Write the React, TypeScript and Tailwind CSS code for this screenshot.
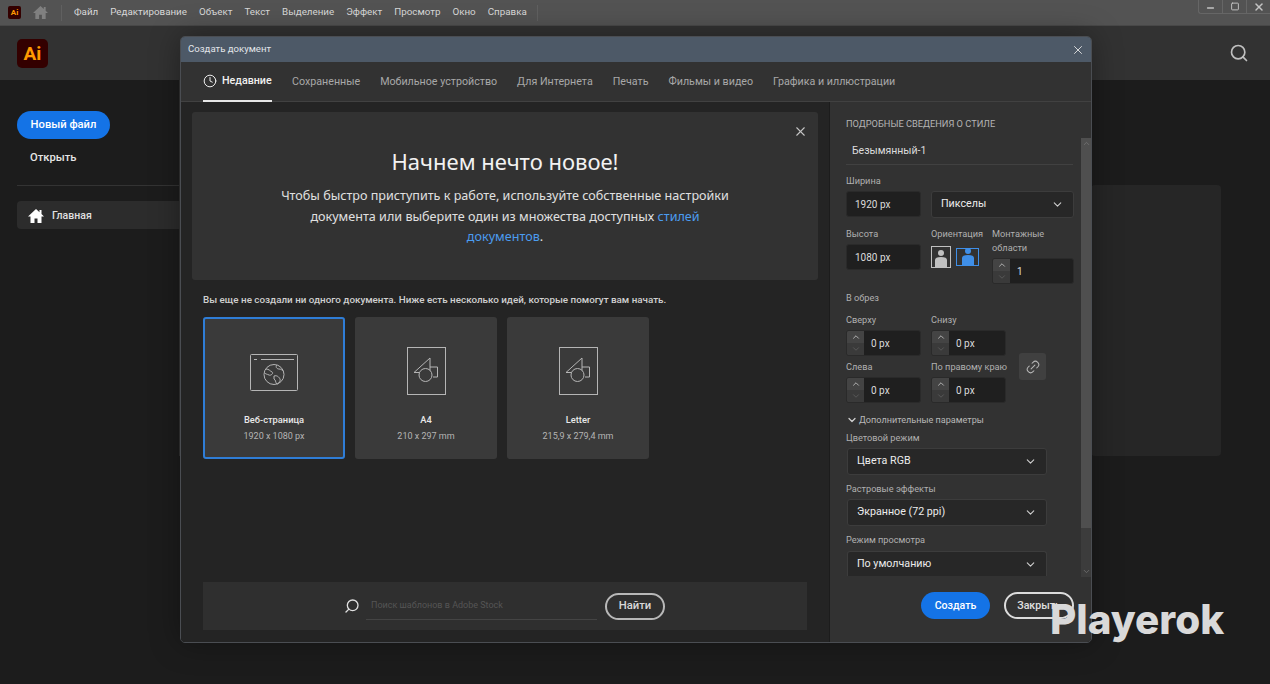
/**
 * Illustrator start screen with the "new document" dialog open
 */
import { ChevronDown, ChevronUp, Clock, Link2, Search, X, Minus, Square } from "lucide-react";

const menu = ["Файл", "Редактирование", "Объект", "Текст", "Выделение", "Эффект", "Просмотр", "Окно", "Справка"];
const tabs = ["Сохраненные", "Мобильное устройство", "Для Интернета", "Печать", "Фильмы и видео", "Графика и иллюстрации"];

function HomeGlyph({ size, color }: { size: number; color: string }) {
  return (
    <svg width={size} height={size} viewBox="0 0 16 15" fill={color} className="shrink-0">
      <path d="M8 0.5 L0 8 H2.5 V14.5 H6.5 V10 H9.5 V14.5 H13.5 V8 H16 L13.5 5.6 V1.5 H11.5 V3.8 Z" />
    </svg>
  );
}

function TopBar() {
  return (
    <div className="flex h-[26px] items-center bg-[#535353] border-b border-[#484848] pl-[8px] relative">
      <div className="w-[13px] h-[13px] rounded-[2px] bg-[#330000] text-[#ff9a00] text-[8px] font-bold flex items-center justify-center leading-none">
        Ai
      </div>
      <div className="ml-[12px]">
        <HomeGlyph size={15} color="#808080" />
      </div>
      <div className="ml-[13px] mr-[12px] w-px h-[16px] bg-[#606060]" />
      <div className="flex gap-[12px] text-[9.8px] text-[#d8d8d8]">
        {menu.map((m) => (
          <span key={m}>{m}</span>
        ))}
      </div>
      <div className="ml-[10px] w-px h-[16px] bg-[#606060]" />
      <div className="absolute right-[0px] top-0 w-[72px] h-[14px] border-l border-b border-[#666] rounded-bl-[3px] flex items-center text-[#c4c4c4]">
        <div className="w-[24px] flex justify-center border-r border-[#666] h-full items-end">
          <Minus className="w-[11px] h-[10px]" strokeWidth={3.5} />
        </div>
        <div className="w-[24px] flex justify-center border-r border-[#666] h-full items-center">
          <Square className="w-[10px] h-[9px]" strokeWidth={2.5} />
        </div>
        <div className="w-[23px] flex justify-center">
          <X className="w-[12px] h-[12px]" strokeWidth={3} />
        </div>
      </div>
    </div>
  );
}

function Sidebar() {
  return (
    <div className="w-[180px] pl-[17px] pt-[31px] shrink-0 border-r border-[#333]">
      <div className="w-[93px] h-[28px] rounded-full bg-[#1473e6] text-white text-[11.2px] font-medium flex items-center justify-center">
        Новый файл
      </div>
      <div className="mt-[11px] pl-[13px] text-[11.2px] font-medium text-[#e6e6e6] leading-[16px]">Открыть</div>
      <div className="mt-[19px] h-px bg-[#333]" />
      <div className="mt-[15px] h-[28px] bg-[#2c2c2c] rounded-l-[4px] flex items-center pl-[11px] pt-[2px] gap-[8px] text-[10.5px] font-medium text-[#e0e0e0]">
        <HomeGlyph size={16} color="#ffffff" />
        Главная
      </div>
    </div>
  );
}

function TemplateIcon() {
  return (
    <svg width="40" height="48" viewBox="0 0 40 48" fill="none" stroke="#b5b5b5" strokeWidth="1" className="ml-[2px]">
      <rect x="0.5" y="0.5" width="38" height="47" />
      <path d="M23 11 L23 25.5 L7 25.5 Z" />
      <path d="M23 20 H30.5 V30 H26" />
      <circle cx="18.5" cy="28" r="6.5" fill="#3a3a3a" />
    </svg>
  );
}

function WebIcon() {
  return (
    <svg width="48" height="38" viewBox="0 0 48 38" fill="none" stroke="#b5b5b5" strokeWidth="1" className="mt-[4px]">
      <rect x="0.5" y="0.5" width="47" height="36" rx="1" />
      <path d="M4 5.5 H7 M11 5.5 H44" />
      <circle cx="24" cy="20.5" r="10" />
      <path d="M16 15 C19 15 20 17 22 18 C24 19 21 22 19 21 C17 20 15 20 15 19 M27 11 C25 13 27 15 29 15 C31 15 32 16 33 17 M24 22 C27 21 29 23 30 25 C31 27 28 30 27 30 C25 28 26 26 24 25 Z" />
    </svg>
  );
}

function Card({ title, sub, selected, icon }: { title: string; sub: string; selected?: boolean; icon: React.ReactNode }) {
  return (
    <div
      className={`w-[142px] h-[142px] rounded-[3px] bg-[#3a3a3a] flex flex-col items-center ${
        selected ? "border-2 border-[#2f7dd6]" : ""
      }`}
    >
      <div className={`flex items-center justify-center h-[48px] ${selected ? "mt-[28px]" : "mt-[30px]"}`}>{icon}</div>
      <div className="mt-[18px] text-[9.3px] font-medium text-[#e8e8e8] leading-[14px]">{title}</div>
      <div className="mt-[2px] text-[9px] text-[#b4b4b4] leading-[14px]">{sub}</div>
    </div>
  );
}

function Label({ children, className = "" }: { children: React.ReactNode; className?: string }) {
  return <div className={`text-[9.2px] text-[#b0b0b0] leading-[12px] ${className}`}>{children}</div>;
}

function Stepper({ value, width }: { value: string; width: string }) {
  return (
    <div className={`flex h-[26px] ${width} bg-[#1f1f1f] rounded-[3px] border border-[#2a2a2a] overflow-hidden`}>
      <div className="w-[17px] shrink-0 flex flex-col bg-[#3f3f3f]">
        <div className="h-[13px] flex items-center justify-center bg-[#444]">
          <ChevronUp className="w-[10px] h-[10px] text-[#c4c4c4]" strokeWidth={2} />
        </div>
        <div className="h-[13px] flex items-center justify-center bg-[#3a3a3a]">
          <ChevronDown className="w-[10px] h-[10px] text-[#5e5e5e]" strokeWidth={2} />
        </div>
      </div>
      <div className="pl-[7px] text-[10px] text-[#dcdcdc] flex items-center">{value}</div>
    </div>
  );
}

function Select({ value, width, clipped }: { value: string; width: string; clipped?: boolean }) {
  return (
    <div
      className={`${width} ${clipped ? "h-[25px] border-b-0 rounded-b-none" : "h-[27px]"} bg-[#272727] border border-[#3c3c3c] rounded-[3px] flex items-center justify-between pl-[9px] pr-[9px] text-[10.7px] text-[#ececec]`}
    >
      {value}
      <ChevronDown className="w-[13px] h-[13px] text-[#cfcfcf]" strokeWidth={2} />
    </div>
  );
}

function TextField({ value }: { value: string }) {
  return (
    <div className="w-[75px] h-[26px] bg-[#1f1f1f] border border-[#2a2a2a] rounded-[3px] pl-[8px] flex items-center text-[10px] text-[#dcdcdc]">
      {value}
    </div>
  );
}

function Person({ active }: { active?: boolean }) {
  const c = active ? "#3f8fe8" : "#c0c0c0";
  return (
    <svg width="16" height="18" viewBox="0 0 16 18" fill={c}>
      <circle cx="8" cy="4" r="3" />
      <path d="M2 18 V11 C2 9 4 8 8 8 C12 8 14 9 14 11 V18 Z" />
    </svg>
  );
}

function StylePanel() {
  return (
    <div className="w-[261px] shrink-0 bg-[#323232] relative pl-[16px] pt-[16px]">
      <div className="text-[9.25px] text-[#b4b4b4] leading-[12px] uppercase">Подробные сведения о стиле</div>
      <div className="mt-[8px] w-[227px] h-[27px] border-b border-[#414141] pl-[6px] flex items-center text-[10.5px] text-[#dcdcdc]">
        Безымянный-1
      </div>

      <Label className="mt-[10px]">Ширина</Label>
      <div className="mt-[4px] flex gap-[10px]">
        <TextField value="1920 px" />
        <Select value="Пикселы" width="w-[143px]" />
      </div>

      <div className="mt-[10px] flex">
        <div className="w-[85px] shrink-0">
          <Label>Высота</Label>
          <div className="mt-[4px]">
            <TextField value="1080 px" />
          </div>
        </div>
        <div className="w-[61px] shrink-0">
          <Label>Ориентация</Label>
          <div className="mt-[6px] flex gap-[5px] items-center">
            <div className="w-[20px] h-[22px] border border-[#c0c0c0] flex items-end justify-center">
              <Person />
            </div>
            <div className="w-[23px] h-[18px] border border-[#3f8fe8] flex items-end justify-center overflow-hidden">
              <Person active />
            </div>
          </div>
        </div>
        <div>
          <Label className="leading-[14px] -mt-[1px]">
            Монтажные
            <br />
            области
          </Label>
          <div className="mt-[3px]">
            <Stepper value="1" width="w-[82px]" />
          </div>
        </div>
      </div>

      <Label className="pt-[8px]">В обрез</Label>
      <div className="mt-[10px] flex items-center">
        <div className="grid grid-cols-[85px_88px] gap-y-[5px]">
          <div>
            <Label>Сверху</Label>
            <div className="mt-[4px]">
              <Stepper value="0 px" width="w-[75px]" />
            </div>
          </div>
          <div>
            <Label>Снизу</Label>
            <div className="mt-[4px]">
              <Stepper value="0 px" width="w-[75px]" />
            </div>
          </div>
          <div>
            <Label>Слева</Label>
            <div className="mt-[4px]">
              <Stepper value="0 px" width="w-[75px]" />
            </div>
          </div>
          <div>
            <Label>По правому краю</Label>
            <div className="mt-[4px]">
              <Stepper value="0 px" width="w-[75px]" />
            </div>
          </div>
        </div>
        <div className="w-[27px] h-[27px] rounded-[3px] bg-[#404040] flex items-center justify-center mt-[16px]">
          <Link2 className="w-[16px] h-[16px] text-[#b8b8b8] -rotate-45" strokeWidth={1.5} />
        </div>
      </div>

      <div className="mt-[11px] flex items-center gap-[1px] text-[9.1px] text-[#b8b8b8] leading-[12px]">
        <ChevronDown className="w-[12px] h-[12px] text-[#d0d0d0]" strokeWidth={2.5} />
        Дополнительные параметры
      </div>
      <Label className="mt-[6px]">Цветовой режим</Label>
      <div className="mt-[4px] ml-[1px]">
        <Select value="Цвета RGB" width="w-[200px]" />
      </div>
      <Label className="mt-[8px]">Растровые эффекты</Label>
      <div className="mt-[4px] ml-[1px]">
        <Select value="Экранное (72 ppi)" width="w-[200px]" />
      </div>
      <Label className="mt-[8px]">Режим просмотра</Label>
      <div className="mt-[5px] ml-[1px]">
        <Select value="По умолчанию" width="w-[200px]" clipped />
      </div>

      <div className="mt-[16px] pl-[75px] flex gap-[14px] text-[10.6px] font-medium">
        <div className="w-[69px] h-[27px] rounded-full bg-[#1473e6] text-white flex items-center justify-center">Создать</div>
        <div className="w-[70px] h-[27px] rounded-full border-2 border-[#dcdcdc] text-[#e0e0e0] flex items-center justify-center">
          Закрыть
        </div>
      </div>

      {/* scrollbar */}
      <div className="absolute right-0 top-[36px] w-[10px] h-[439px] bg-[#3c3c3c] flex flex-col justify-between items-center">
        <div className="h-[390px] w-full bg-[#4f4f4f] flex justify-center pt-[1px]">
          <ChevronUp className="w-[9px] h-[9px] text-[#777]" />
        </div>
        <ChevronDown className="w-[9px] h-[9px] text-[#777] mb-[1px]" />
      </div>
    </div>
  );
}

function Dialog() {
  return (
    <div className="absolute left-[180px] top-[36px] w-[912px] h-[607px] rounded-[5px] overflow-hidden border border-[#4a4d52] flex flex-col shadow-[0_0_30px_rgba(0,0,0,0.35)]">
      <div className="h-[25px] shrink-0 bg-[#4d5967] flex items-center justify-between pl-[7px] pr-[6px] text-[9.6px] text-[#e2e6ea]">
        Создать документ
        <X className="w-[14px] h-[14px] text-[#e8e8e8]" strokeWidth={1.5} />
      </div>
      <div className="h-[40px] shrink-0 bg-[#323232] border-b border-[#414141] flex pl-[22px] text-[10.7px] text-[#a8a8a8]">
        <div className="h-[40px] border-b-2 border-[#e6e6e6] w-[69px] flex items-center gap-[5px] text-[#f0f0f0] font-medium">
          <Clock className="w-[14px] h-[14px]" strokeWidth={1.7} />
          Недавние
        </div>
        <div className="ml-[20px] flex gap-[20px] items-center h-[40px]">
          {tabs.map((t) => (
            <span key={t}>{t}</span>
          ))}
        </div>
      </div>
      <div className="flex flex-1 min-h-0">
        <div className="w-[649px] shrink-0 bg-[#242424] border-r border-[#1c1c1c] pl-[11px] pt-[10px]">
          <div className="relative w-[626px] h-[168px] bg-[#323232] rounded-[3px] flex flex-col items-center pt-[34px] font-['Noto_Sans',sans-serif]">
            <X className="absolute right-[10px] top-[12px] w-[15px] h-[15px] text-[#c4c4c4]" strokeWidth={1.7} />
            <div className="text-[22px] leading-[30px] text-[#f2f2f2]">Начнем нечто новое!</div>
            <div className="mt-[10px] w-[456px] text-center text-[12.6px] leading-[20.5px] text-[#e0e0e0]">
              Чтобы быстро приступить к работе, используйте собственные настройки документа или выберите один из множества доступных{" "}
              <span className="text-[#4b9cf0]">стилей</span> <span className="text-[#4b9cf0]">документов</span>.
            </div>
          </div>
          <div className="ml-[11px] mt-[13px] text-[9.83px] text-[#d0d0d0] font-medium leading-[14px]">
            Вы еще не создали ни одного документа. Ниже есть несколько идей, которые помогут вам начать.
          </div>
          <div className="ml-[11px] mt-[10px] flex gap-[10px]">
            <Card title="Веб-страница" sub="1920 x 1080 px" selected icon={<WebIcon />} />
            <Card title="A4" sub="210 x 297 mm" icon={<TemplateIcon />} />
            <Card title="Letter" sub="215,9 x 279,4 mm" icon={<TemplateIcon />} />
          </div>
          <div className="ml-[11px] mt-[123px] w-[604px] h-[48px] bg-[#2f2f2f] flex items-center pl-[141px]">
            <Search className="w-[16px] h-[16px] text-[#e0e0e0] -scale-x-100" strokeWidth={2} />
            <div className="ml-[6px] w-[231px] h-[27px] border-b border-[#444] flex items-center pl-[5px] text-[9px] text-[#555]">
              Поиск шаблонов в Adobe Stock
            </div>
            <div className="ml-[8px] w-[60px] h-[27px] rounded-full border-2 border-[#b8b8b8] flex items-center justify-center text-[11.3px] font-medium text-[#d8d8d8]">
              Найти
            </div>
          </div>
        </div>
        <StylePanel />
      </div>
    </div>
  );
}

export default function App() {
  return (
    <div className="relative w-[1270px] h-[684px] overflow-hidden bg-[#1c1c1c] font-['Roboto','Noto_Sans',sans-serif]">
      <TopBar />
      <div className="h-[54px] bg-[#323232] flex items-center justify-between pl-[17px] pr-[21px]">
        <div className="w-[31px] h-[29px] rounded-[5px] bg-[#330000] text-[#ff9a00] text-[19px] font-bold flex items-center justify-center leading-none">
          Ai
        </div>
        <Search className="w-[20px] h-[20px] text-[#c0c0c0]" strokeWidth={2} />
      </div>
      <div className="flex">
        <Sidebar />
        <div className="flex-1 flex justify-end pr-[49px] pt-[105px]">
          <div className="w-[130px] h-[271px] bg-[#262626] rounded-[4px]" />
        </div>
      </div>
      <Dialog />
      {/* watermark */}
      <div className="absolute left-[1050px] top-[595px] text-[40.4px] leading-[50px] font-extrabold text-[#d9d9d9] font-['Inter',sans-serif]">
        Playerok
      </div>
    </div>
  );
}
